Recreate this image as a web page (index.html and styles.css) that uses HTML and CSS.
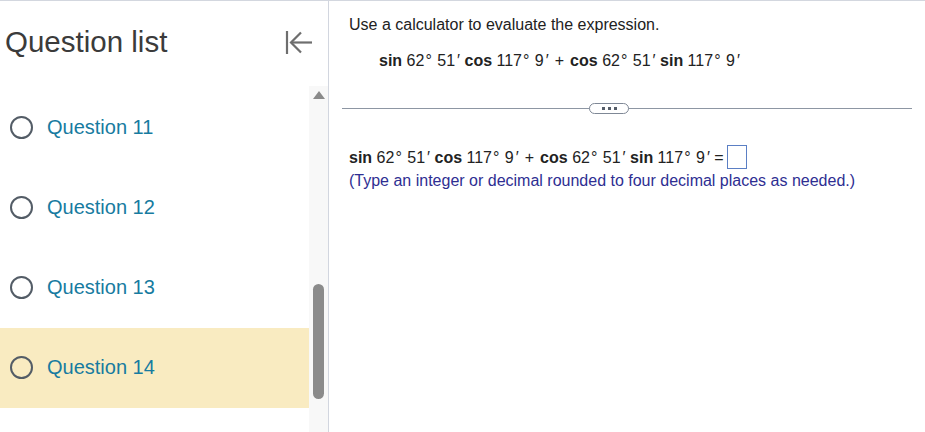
FILE: index.html
```html
<!DOCTYPE html>
<html>
<head>
<meta charset="utf-8">
<link rel="stylesheet" href="styles.css">
</head>
<body>
<div class="app">
  <aside class="sidebar">
    <div class="sidebar-header">
      <h1 class="title">Question list</h1>
      <svg class="collapse" width="28" height="26" viewBox="0 0 28 26">
        <line x1="2" y1="2" x2="2" y2="25" stroke="#6e6e6e" stroke-width="2.2"/>
        <line x1="6" y1="13.5" x2="27" y2="13.5" stroke="#6e6e6e" stroke-width="2.2"/>
        <polyline points="16,3.5 6,13.5 16,23.5" fill="none" stroke="#6e6e6e" stroke-width="2.2"/>
      </svg>
    </div>
    <div class="list-wrap">
      <ul class="qlist">
        <li class="qitem"><span class="radio"></span><span class="qlabel">Question 11</span></li>
        <li class="qitem"><span class="radio"></span><span class="qlabel">Question 12</span></li>
        <li class="qitem"><span class="radio"></span><span class="qlabel">Question 13</span></li>
        <li class="qitem current"><span class="radio"></span><span class="qlabel">Question 14</span></li>
      </ul>
      <div class="scrollbar">
        <span class="arrow-up"></span>
        <span class="thumb"></span>
      </div>
    </div>
  </aside>
  <main class="main">
    <p class="instr">Use a calculator to evaluate the expression.</p>
    <p class="expr"><b>sin</b> 62<span class="deg">°</span> 51<span class="pr">′</span> <b>cos</b> 117<span class="deg">°</span> 9<span class="pr">′</span><span class="op">+</span><b>cos</b> 62<span class="deg">°</span> 51<span class="pr">′</span> <b>sin</b> 117<span class="deg">°</span> 9<span class="pr">′</span></p>
    <div class="divider"><span class="pill"><i></i><i></i><i></i></span></div>
    <p class="answer"><b>sin</b> 62<span class="deg">°</span> 51<span class="pr">′</span> <b>cos</b> 117<span class="deg">°</span> 9<span class="pr">′</span><span class="op">+</span><b>cos</b> 62<span class="deg">°</span> 51<span class="pr">′</span> <b>sin</b> 117<span class="deg">°</span> 9<span class="pr">′</span> =<span class="box"></span></p>
    <p class="note">(Type an integer or decimal rounded to four decimal places as needed.)</p>
  </main>
</div>
</body>
</html>
```
FILE: styles.css
```css
* { box-sizing: border-box; }
html, body { margin: 0; padding: 0; background: #fff; }
body { font-family: "Liberation Sans", Arial, sans-serif; color: #222; }

.app {
  display: flex;
  width: 925px;
  height: 432px;
  border-top: 1px solid #d3d7df;
  overflow: hidden;
}

.sidebar {
  width: 329px;
  flex: none;
  border-right: 1px solid #d2d6df;
  display: flex;
  flex-direction: column;
}

.sidebar-header {
  height: 85px;
  display: flex;
  align-items: center;
  justify-content: space-between;
  padding: 2px 15px 6px 5px;
}

.title {
  margin: 0;
  font-weight: normal;
  font-size: 29.5px;
  color: #3b3b3b;
}

.collapse { display: block; margin-top: 0; }

.list-wrap {
  flex: 1;
  display: flex;
}

.qlist {
  list-style: none;
  margin: 2px 0 0;
  padding: 0;
  width: 309px;
}

.qitem {
  height: 80px;
  display: flex;
  align-items: center;
  padding-left: 10px;
  padding-bottom: 2px;
}

.qitem.current { background: #f9ebc1; }

.radio {
  width: 23px;
  height: 23px;
  border: 2.5px solid #535c66;
  border-radius: 50%;
  flex: none;
}

.qlabel {
  margin-left: 14px;
  font-size: 20px;
  color: #177ba0;
}

.scrollbar {
  width: 19px;
  background: #f8f8f8;
  display: flex;
  flex-direction: column;
  align-items: center;
}

.arrow-up {
  margin-top: 5px;
  width: 0;
  height: 0;
  border-left: 6px solid transparent;
  border-right: 6px solid transparent;
  border-bottom: 8px solid #8a8a8a;
}

.thumb {
  margin-top: 185px;
  width: 11px;
  height: 115px;
  border-radius: 6px;
  background: #8b8b8b;
}

.main {
  flex: 1;
  padding: 0 13px;
  font-size: 16px;
}

.instr {
  margin: 15px 0 0 7px;
  line-height: 18px;
  color: #222;
}

.expr {
  margin: 18px 0 0 37px;
  line-height: 18px;
  color: #222;
  white-space: pre;
}

.deg { margin-left: 1px; margin-right: 1px; }
.pr { margin-left: 2px; }
.op { margin: 0 6px; }

.divider {
  margin-top: 38px;
  height: 1px;
  background: #8d96a3;
  position: relative;
}

.pill {
  position: absolute;
  left: 247px;
  top: -5px;
  width: 40px;
  height: 11px;
  border: 1px solid #7f8896;
  border-radius: 6px;
  background: #fff;
  display: flex;
  align-items: center;
  justify-content: center;
  gap: 3px;
}

.pill i {
  width: 3px;
  height: 3px;
  background: #555d69;
  display: block;
}

.answer {
  margin: 37px 0 0 7px;
  line-height: 24px;
  color: #222;
  white-space: pre;
}

.box {
  display: inline-block;
  vertical-align: middle;
  width: 20px;
  height: 24px;
  border: 1px solid #5b7fc4;
  margin-left: 3px;
  margin-top: -3px;
}

.note {
  margin: 1px 0 0 7px;
  line-height: 20px;
  color: #2e2e92;
}
```
